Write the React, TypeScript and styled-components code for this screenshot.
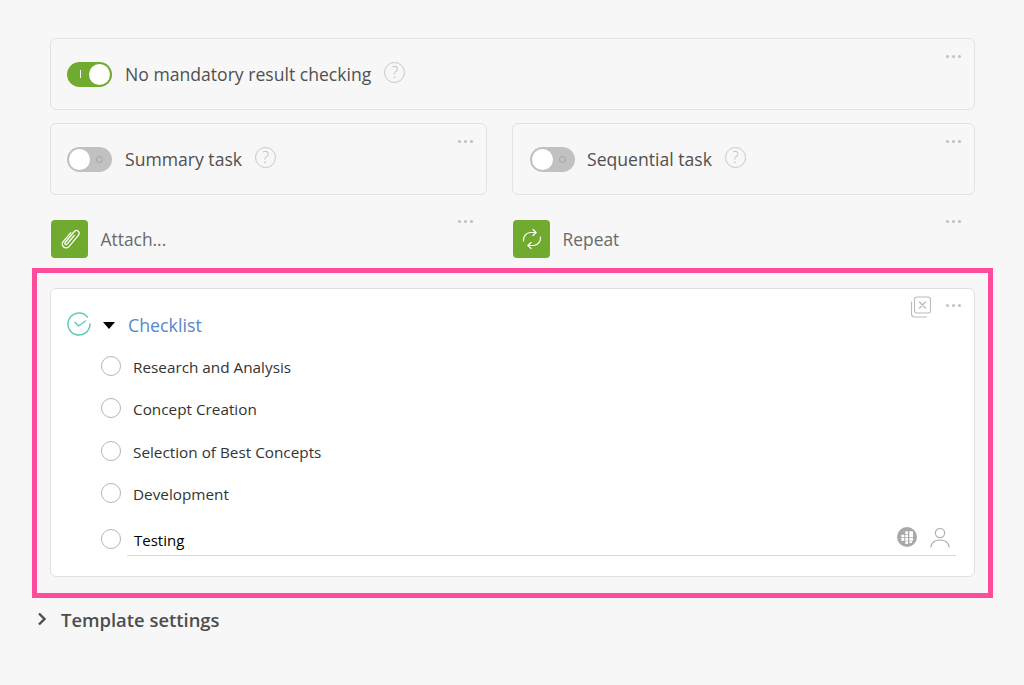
import React from 'react';
import styled, { createGlobalStyle } from 'styled-components';

const GlobalStyle = createGlobalStyle`
  html, body {
    margin: 0;
    padding: 0;
    background: #f7f7f7;
    font-family: 'Open Sans', 'Noto Sans', sans-serif;
  }
`;

const Page = styled.div`
  width: 1024px;
  height: 685px;
  box-sizing: border-box;
  padding: 38px 49px 0 50px;
  overflow: hidden;
`;

const Card = styled.div<{ $shifted?: boolean }>`
  position: relative;
  box-sizing: border-box;
  height: 72px;
  padding: 0 16px 0 ${p => (p.$shifted ? '17px' : '16px')};
  display: flex;
  align-items: center;
  border: 1px solid #e2e2e2;
  border-radius: 6px;
`;

const Columns = styled.div`
  display: grid;
  grid-template-columns: 437px 463px;
  column-gap: 25px;
  margin-top: 13px;
`;

const AttachRow = styled(Columns)`
  margin-top: 25px;
`;

const Toggle = styled.div<{ $on?: boolean }>`
  position: relative;
  flex: none;
  width: 45px;
  height: 25px;
  border-radius: 13px;
  background: ${p => (p.$on ? '#70ab2f' : '#c1c1c1')};
  &::before {
    content: '';
    position: absolute;
    top: 2px;
    left: ${p => (p.$on ? '22px' : '2px')};
    width: 21px;
    height: 21px;
    border-radius: 50%;
    background: #fff;
  }
  &::after {
    content: '';
    position: absolute;
    box-sizing: border-box;
    ${p =>
      p.$on
        ? 'left: 13px; top: 8px; width: 1px; height: 8px; background: #fff;'
        : 'left: 29px; top: 9px; width: 7px; height: 7px; border-radius: 50%; border: 1px solid #a5a5a5;'}
  }
`;

const Label = styled.span<{ $shifted?: boolean }>`
  margin: -1px 0 0 ${p => (p.$shifted ? '12px' : '13px')};
  font-size: 17.6px;
  color: #505050;
  line-height: 24px;
`;

const Help = styled.span`
  flex: none;
  box-sizing: border-box;
  width: 21px;
  height: 21px;
  margin: -4px 0 0 13px;
  display: flex;
  align-items: center;
  justify-content: center;
  border: 1px solid #c8c8c8;
  border-radius: 50%;
  color: #bcbcbc;
  font-size: 16px;
  font-weight: 300;
  line-height: 1;
`;

const Dots = styled.div<{ $top?: number; $right?: number }>`
  position: absolute;
  top: ${p => p.$top ?? 16}px;
  right: ${p => p.$right ?? 13}px;
  display: flex;
  gap: 3px;
  & > i {
    width: 3px;
    height: 3px;
    border-radius: 50%;
    background: #c0c0c0;
  }
`;

const ActionCell = styled.div`
  position: relative;
  height: 38px;
  padding-left: 1px;
  display: flex;
  align-items: center;
`;

const Tile = styled.div`
  flex: none;
  width: 37px;
  height: 38px;
  border-radius: 4px;
  background: #70ab2f;
  display: flex;
  align-items: center;
  justify-content: center;
`;

const ActionLabel = styled.span`
  margin: -1px 0 0 12.5px;
  font-size: 17.4px;
  color: #6a6a6a;
`;

const Highlight = styled.div`
  margin: 10px -18px 0;
  padding: 15px 13px 16px;
  border: 5px solid #ff4b9b;
`;

const ChecklistCard = styled.div`
  position: relative;
  box-sizing: border-box;
  height: 289px;
  padding: 23px 18px 0 16px;
  background: #fff;
  border: 1px solid #e0e0e0;
  border-radius: 6px;
`;

const CardTools = styled.div`
  position: absolute;
  top: 7px;
  right: 42px;
  display: flex;
`;

const CheckIcon = styled.svg`
  margin-top: -2px;
`;

const Header = styled.div`
  display: flex;
  align-items: center;
  height: 26px;
`;

const Caret = styled.div`
  width: 0;
  height: 0;
  margin-left: 12px;
  border-left: 6.5px solid transparent;
  border-right: 6.5px solid transparent;
  border-top: 7px solid #000;
`;

const Title = styled.span`
  margin-left: 13px;
  font-size: 17.8px;
  color: #5b86c8;
`;

const Items = styled.ul`
  list-style: none;
  margin: 8px 0 0;
  padding: 0 0 0 34px;
`;

const Item = styled.li`
  height: 42.33px;
  display: flex;
  align-items: center;
  font-size: 15.3px;
  color: #333;
`;

const Circle = styled.span<{ $tight?: boolean }>`
  flex: none;
  box-sizing: border-box;
  width: 20px;
  height: 20px;
  margin: -2px ${p => (p.$tight ? 0 : '12px')} 0 0;
  border: 1px solid #b5b5b5;
  border-radius: 50%;
`;

const InputRow = styled.div`
  display: flex;
  align-items: center;
  height: 42px;
  margin: 4px 0 0 34px;
`;

const InputLine = styled.div`
  flex: 1;
  align-self: flex-start;
  height: 31px;
  margin-left: 6px;
  padding: 5px 0 0 7px;
  display: flex;
  align-items: center;
  justify-content: space-between;
  border-bottom: 1px solid #d8d8d8;
  font-size: 15px;
  color: #000;
`;

const InputIcons = styled.div`
  display: flex;
  align-items: center;
  gap: 13px;
  margin: -5px 6px 0 0;
`;

const Settings = styled.div`
  display: flex;
  align-items: center;
  margin: 7px 0 0 -13px;
  height: 28px;
  font-size: 18.4px;
  font-weight: 600;
  color: #4d4d4d;
`;

const SettingsLabel = styled.span`
  margin-left: 14px;
`;

const More = ({ top, right }: { top?: number; right?: number }) => (
  <Dots $top={top} $right={right}>
    <i />
    <i />
    <i />
  </Dots>
);

const ToggleCard = ({ label, on, shifted }: { label: string; on?: boolean; shifted?: boolean }) => (
  <Card $shifted={shifted}>
    <Toggle $on={on} />
    <Label $shifted={shifted}>{label}</Label>
    <Help>?</Help>
    <More />
  </Card>
);

const items = ['Research and Analysis', 'Concept Creation', 'Selection of Best Concepts', 'Development'];

export default function App() {
  return (
    <>
      <GlobalStyle />
      <Page>
        <ToggleCard label="No mandatory result checking" on />
        <Columns>
          <ToggleCard label="Summary task" />
          <ToggleCard label="Sequential task" shifted />
        </Columns>
        <AttachRow>
          <ActionCell>
            <Tile>
              <svg width="30" height="30" viewBox="0 0 24 24" fill="none" stroke="#fff" strokeWidth="1" strokeLinecap="round" strokeLinejoin="round">
                <path transform="rotate(40 12.7 11.5)" d="M9.7 8v9.5a3 3 0 0 0 6 0V5.5a2.2 2.2 0 0 0-4.4 0V17a1 1 0 0 0 2 0V8" />
              </svg>
            </Tile>
            <ActionLabel>Attach...</ActionLabel>
            <More top={0} right={14} />
          </ActionCell>
          <ActionCell>
            <Tile>
              <svg width="22" height="22" viewBox="0 0 22 22" fill="none" stroke="#fff" strokeWidth="1.2" strokeLinecap="round" strokeLinejoin="round">
                <path d="M2.5 13A7.5 7.5 0 0 1 9 4.5h5.5M12 1.5l3.2 3-3.2 3" />
                <path d="M19.5 9A7.5 7.5 0 0 1 13 17.5H7.5M10 20.5l-3.2-3 3.2-3" />
              </svg>
            </Tile>
            <ActionLabel>Repeat</ActionLabel>
            <More top={0} right={14} />
          </ActionCell>
        </AttachRow>
        <Highlight>
          <ChecklistCard>
            <CardTools>
              <svg width="22" height="22" viewBox="0 0 22 22" fill="none" stroke="#bcbcbc" strokeWidth="1.1" strokeLinecap="round">
                <rect x="4.5" y="1" width="16" height="16" rx="2.5" />
                <path d="M9.5 6l6 6M15.5 6l-6 6" strokeWidth="1.4" />
                <path d="M1.5 6v12a3 3 0 0 0 3 3h12" />
              </svg>
            </CardTools>
            <More top={15} right={13} />
            <Header>
              <CheckIcon width="24" height="24" viewBox="0 0 24 24" fill="none" stroke="#62c9bb" strokeWidth="1.5" strokeLinecap="round" strokeLinejoin="round">
                <path d="M20.5 5A11 11 0 1 0 23 12" />
                <path d="M8 10.5l3.5 3.5 7-5" />
              </CheckIcon>
              <Caret />
              <Title>Checklist</Title>
            </Header>
            <Items>
              {items.map(item => (
                <Item key={item}>
                  <Circle />
                  {item}
                </Item>
              ))}
            </Items>
            <InputRow>
              <Circle $tight />
              <InputLine>
                Testing
                <InputIcons>
                  <svg width="20" height="20" viewBox="0 0 20 20">
                    <circle cx="10" cy="10" r="10" fill="#a8a8a8" />
                    <path d="M4.3 7.7h3v2.6h-3zM4.3 11h3v2.7h-3zM8.3 4.3H11V7H8.3zM8.3 7.7H11v2.6H8.3zM8.3 11H11v2.7H8.3zM8.3 14.3H11V17H8.3zM12.3 4.3H16v6h-3.7zM12.3 11H16v2.7h-3.7zM12.3 14.3H15V16h-2.7z" fill="#fff" />
                  </svg>
                  <svg width="20" height="21" viewBox="0 0 20 21" fill="none" stroke="#b0b0b0" strokeWidth="1.2" strokeLinecap="round">
                    <circle cx="10" cy="6" r="4.6" />
                    <path d="M0.8 20c.8-4.4 4.4-7 9.2-7s8.4 2.6 9.2 7" />
                  </svg>
                </InputIcons>
              </InputLine>
            </InputRow>
          </ChecklistCard>
        </Highlight>
        <Settings>
          <svg width="10" height="14" viewBox="0 0 10 14" fill="none" stroke="#4d4d4d" strokeWidth="2.4">
            <path d="M2 1.5L7.5 7 2 12.5" />
          </svg>
          <SettingsLabel>Template settings</SettingsLabel>
        </Settings>
      </Page>
    </>
  );
}
